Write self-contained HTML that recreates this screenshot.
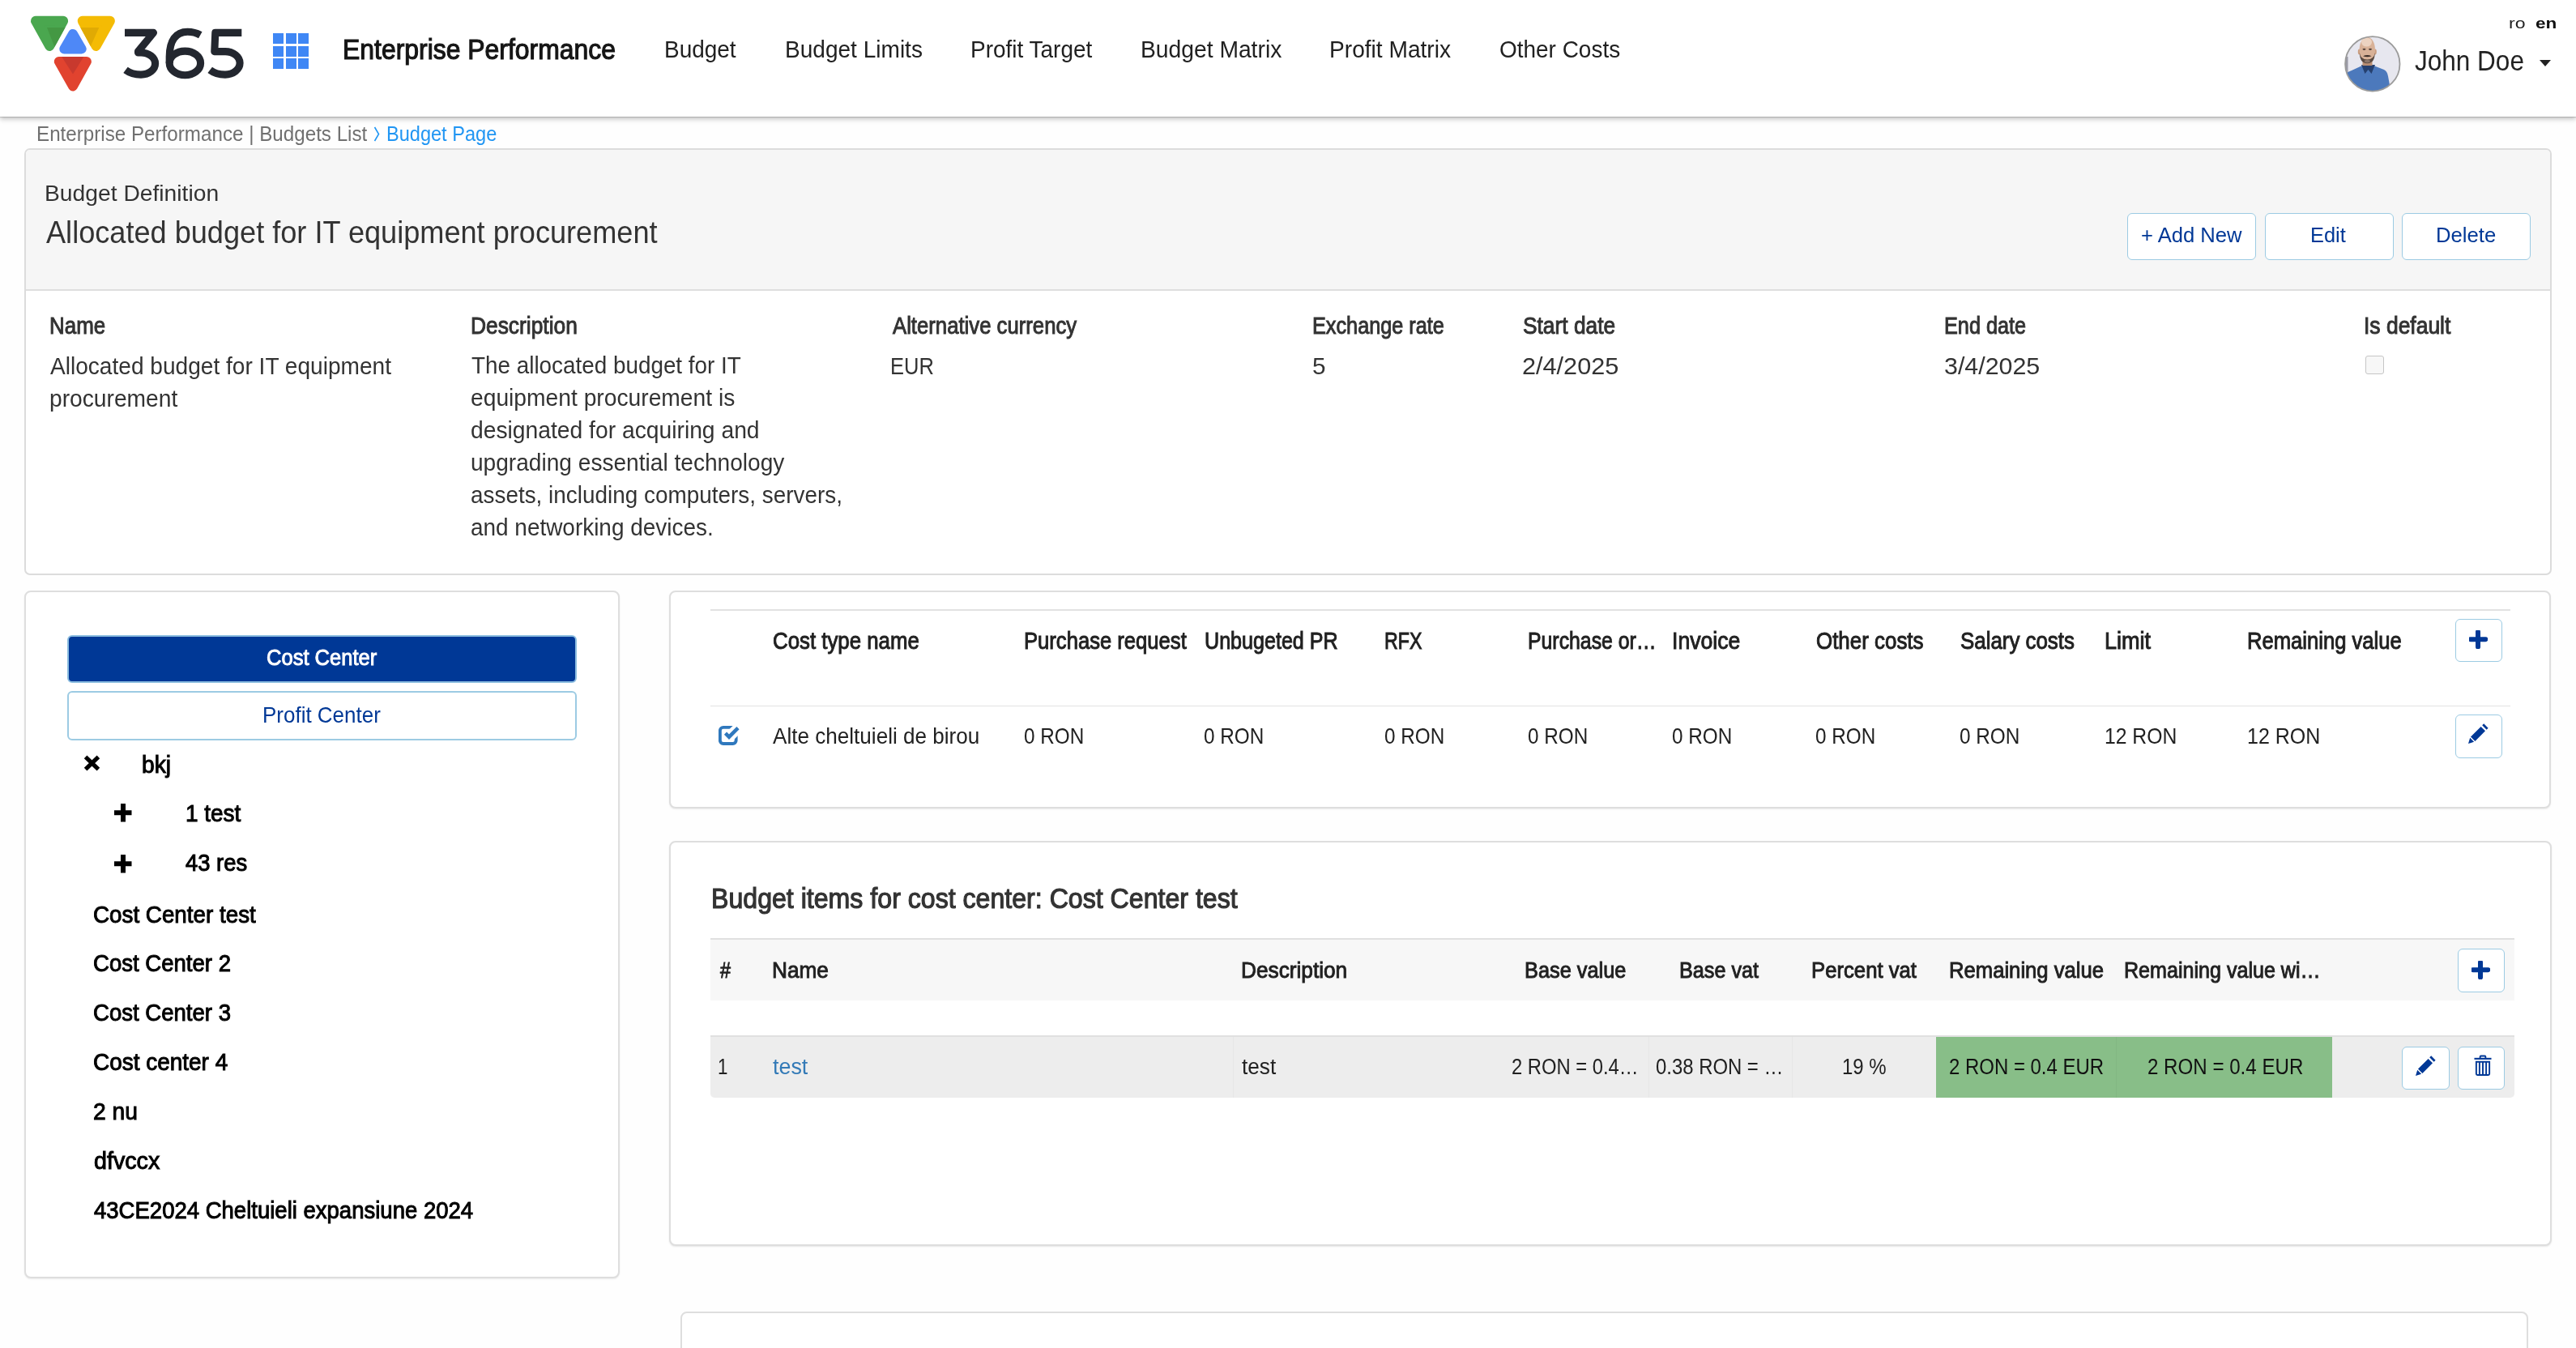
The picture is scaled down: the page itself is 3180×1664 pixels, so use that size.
<!DOCTYPE html>
<html><head><meta charset="utf-8"><title>Budget Page</title>
<style>
html,body{margin:0;padding:0}
body{width:3180px;height:1664px;position:relative;overflow:hidden;background:#fefefe;font-family:"Liberation Sans",sans-serif}
.r{position:absolute}
.t{position:absolute;white-space:nowrap;transform-origin:0 0;z-index:3}
.bl{display:inline-block;width:0;height:0}
</style></head><body>
<div class="r" style="left:0.0px;top:0.0px;width:3180.0px;height:144.0px;background:#fff;box-shadow:0 1px 1px rgba(0,0,0,.14),0 3px 6px rgba(0,0,0,.24);z-index:1"></div>
<svg class="r" style="left:0;top:0;z-index:2" width="150" height="120" viewBox="0 0 150 120">
<defs>
<mask id="mg"><path d="M44 25.8 L78.1 25.8 L61.2 56.9Z" fill="#fff" stroke="#fff" stroke-width="12" stroke-linejoin="round"/></mask>
<mask id="my"><path d="M101.7 25.8 L135.9 25.8 L118.6 56.9Z" fill="#fff" stroke="#fff" stroke-width="12" stroke-linejoin="round"/></mask>
<mask id="mr"><path d="M72.8 75.9 L106.9 75.9 L90 106.4Z" fill="#fff" stroke="#fff" stroke-width="12" stroke-linejoin="round"/></mask>
</defs>
<path d="M44 25.8 L78.1 25.8 L61.2 56.9Z" fill="#4aa74f" stroke="#4aa74f" stroke-width="12" stroke-linejoin="round"/>
<path d="M58 34.1 L83 34.1 L67.4 58 Z" fill="#449843" mask="url(#mg)"/>
<path d="M101.7 25.8 L135.9 25.8 L118.6 56.9Z" fill="#f4bb04" stroke="#f4bb04" stroke-width="12" stroke-linejoin="round"/>
<path d="M96 34.1 L122.3 34.1 L111.4 58 Z" fill="#e0aa04" mask="url(#my)"/>
<path d="M90 41.9 L100.7 60.4 L79.3 60.4Z" fill="#4e88f7" stroke="#4e88f7" stroke-width="12" stroke-linejoin="round"/>
<path d="M72.8 75.9 L106.9 75.9 L90 106.4Z" fill="#e1432f" stroke="#e1432f" stroke-width="12" stroke-linejoin="round"/>
<path d="M75.5 69 L104 69 L90 91.5 Z" fill="#c8392e" mask="url(#mr)"/>
</svg>
<div class="r" style="left:337.0px;top:41.0px;width:13.0px;height:13.0px;background:#3f87f5;z-index:2"></div>
<div class="r" style="left:352.5px;top:41.0px;width:13.0px;height:13.0px;background:#3f87f5;z-index:2"></div>
<div class="r" style="left:368.0px;top:41.0px;width:13.0px;height:13.0px;background:#3f87f5;z-index:2"></div>
<div class="r" style="left:337.0px;top:56.5px;width:13.0px;height:13.0px;background:#3f87f5;z-index:2"></div>
<div class="r" style="left:352.5px;top:56.5px;width:13.0px;height:13.0px;background:#3f87f5;z-index:2"></div>
<div class="r" style="left:368.0px;top:56.5px;width:13.0px;height:13.0px;background:#3f87f5;z-index:2"></div>
<div class="r" style="left:337.0px;top:72.0px;width:13.0px;height:13.0px;background:#3f87f5;z-index:2"></div>
<div class="r" style="left:352.5px;top:72.0px;width:13.0px;height:13.0px;background:#3f87f5;z-index:2"></div>
<div class="r" style="left:368.0px;top:72.0px;width:13.0px;height:13.0px;background:#3f87f5;z-index:2"></div>
<svg class="r" style="left:0;top:0;z-index:2" width="320" height="110" viewBox="0 0 320 110">
<g fill="none" stroke="#23272f" stroke-width="9.1" stroke-linejoin="round">
<path d="M154 40.35 H189.5 L170.5 63.5 V65 H174 A17.6 13.55 0 0 1 174 92.1 C166 92.1 160 90 155 86.3" stroke-linecap="butt"/>
<path d="M247.3 43.3 C242 40.3 236.5 39.3 231.5 39.3 C217 39.3 209.2 50 209.2 70 L209.2 78"/>
<ellipse cx="228.4" cy="77.95" rx="19.2" ry="14.85"/>
<path d="M298.3 40.35 H265.8 L264.8 63.6 H278 A18.1 14.25 0 0 1 278 92.1 C270 92.1 264 90 259.2 86.3"/>
</g></svg>
<svg class="r" style="left:2894px;top:43.5px;z-index:2" width="70" height="70" viewBox="0 0 70 70">
<defs><clipPath id="av"><circle cx="34.8" cy="34.9" r="33.5"/></clipPath></defs>
<g clip-path="url(#av)">
<rect x="0" y="0" width="70" height="70" fill="#e7e7ef"/>
<rect x="0" y="26" width="4.5" height="22" fill="#9a9aa6"/>
<path d="M-2 72 L-2 50 Q3 45 9 43 L22 37 L36 37 L49 42 Q53 44 54 50 L58 72 Z" fill="#4c79bc"/>
<path d="M21 36 L25.5 47 L29.5 42 L33.5 47 L38 36 Z" fill="#25406f"/>
<rect x="22.5" y="27" width="12" height="10" fill="#b88d72"/>
<ellipse cx="18.6" cy="20" rx="1.8" ry="3.4" fill="#c99d80"/>
<ellipse cx="38" cy="20" rx="1.8" ry="3.4" fill="#c99d80"/>
<ellipse cx="28.3" cy="17.5" rx="9.7" ry="15.8" fill="#d8b197"/>
<ellipse cx="27.5" cy="8" rx="6.5" ry="5.5" fill="#ecd3c1"/>
<ellipse cx="24.5" cy="16.8" rx="2" ry="1.1" fill="#54423a"/>
<ellipse cx="32" cy="16.8" rx="2" ry="1.1" fill="#54423a"/>
<path d="M18.8 21 Q19 34.2 28.3 34.2 Q37.6 34.2 37.8 21 Q36.5 29.5 28.3 29.5 Q20.1 29.5 18.8 21 Z" fill="#5a4a40"/>
<path d="M23 25.3 Q28.3 22.8 33.6 25.3 Q28.3 27.2 23 25.3Z" fill="#3c2e27"/>
<ellipse cx="28.3" cy="31.6" rx="3.6" ry="1.8" fill="#8d776b"/>
</g>
<circle cx="34.8" cy="34.9" r="33.7" fill="none" stroke="#9b9b9b" stroke-width="1.8"/>
</svg>
<div class="r" style="left:3135px;top:73.5px;width:0;height:0;border-left:7.5px solid transparent;border-right:7.5px solid transparent;border-top:8px solid #222;z-index:2"></div>
<svg class="r" style="left:460px;top:155px" width="12" height="22"><path d="M2.5 2 L7.5 10.5 L2.5 19" stroke="#2196f3" stroke-width="1.6" fill="none"/></svg>
<div class="r" style="left:30.2px;top:183.4px;width:3120.3px;height:526.3px;border:2px solid #dcdcdc;border-radius:7px;background:#fff;box-sizing:border-box;overflow:hidden"></div>
<div class="r" style="left:32.2px;top:185.4px;width:3116.3px;height:174.1px;background:#f6f6f6;border-bottom:2px solid #dedede;border-radius:5px 5px 0 0;box-sizing:border-box"></div>
<div class="r" style="left:2626.0px;top:262.7px;width:159.0px;height:58.3px;border:1.75px solid #9ccbe3;border-radius:6px;background:#fff;box-sizing:border-box"></div>
<div class="r" style="left:2795.5px;top:262.7px;width:159.1px;height:58.3px;border:1.75px solid #9ccbe3;border-radius:6px;background:#fff;box-sizing:border-box"></div>
<div class="r" style="left:2965.0px;top:262.7px;width:159.4px;height:58.3px;border:1.75px solid #9ccbe3;border-radius:6px;background:#fff;box-sizing:border-box"></div>
<div class="r" style="left:2920.0px;top:438.6px;width:23.4px;height:23.2px;border:1.5px solid #c6c6c6;border-radius:3px;background:#f7f7f7;box-sizing:border-box"></div>
<div class="r" style="left:30.0px;top:729.0px;width:735.0px;height:848.5px;border:2px solid #dedede;border-radius:8px;background:#fff;box-sizing:border-box;box-shadow:0 1px 2px rgba(0,0,0,.08)"></div>
<div class="r" style="left:83.0px;top:784.0px;width:629.0px;height:58.5px;background:#003896;border:2px solid #8cbde0;border-radius:6px;box-sizing:border-box"></div>
<div class="r" style="left:83.0px;top:852.5px;width:629.0px;height:61.0px;background:#fff;border:2px solid #9ccbe3;border-radius:6px;box-sizing:border-box"></div>
<svg class="r" style="left:103px;top:932px" width="21" height="20"><path d="M2.6 2.4 L18.4 17.6 M18.4 2.4 L2.6 17.6" stroke="#000" stroke-width="5.2" stroke-linecap="butt"/></svg>
<svg class="r" style="left:141px;top:992.0px" width="22" height="23"><path d="M11 0 V22.5 M0 11.2 H21.5" stroke="#000" stroke-width="6"/></svg>
<svg class="r" style="left:141px;top:1054.7px" width="22" height="23"><path d="M11 0 V22.5 M0 11.2 H21.5" stroke="#000" stroke-width="6"/></svg>
<div class="r" style="left:825.5px;top:729.0px;width:2323.9px;height:269.4px;border:2px solid #dedede;border-radius:8px;background:#fff;box-sizing:border-box;box-shadow:0 1px 2px rgba(0,0,0,.08)"></div>
<div class="r" style="left:877.0px;top:752.0px;width:2221.5px;height:1.6px;background:#e2e2e2"></div>
<div class="r" style="left:877.0px;top:870.5px;width:2221.5px;height:1.6px;background:#e2e2e2"></div>
<div class="r" style="left:3031.0px;top:763.5px;width:58.0px;height:53.5px;border:1.75px solid #9ccbe3;border-radius:6px;background:#fff;box-sizing:border-box"></div>
<div class="r" style="left:3031.0px;top:882.0px;width:58.0px;height:53.5px;border:1.75px solid #9ccbe3;border-radius:6px;background:#fff;box-sizing:border-box"></div>
<svg class="r" style="left:3047.5px;top:777.5px" width="23" height="23" viewBox="0 0 23 23"><path d="M11 2 V20.5 M1.8 11.2 H20.3" stroke="#003896" stroke-width="6" stroke-linecap="round"/></svg>
<svg class="r" style="left:3047.0px;top:893.3px" width="26" height="26" viewBox="0 0 26 26"><path d="M19.2 0.3 L24.6 5.7 L22.6 7.7 L17.2 2.3Z M15.6 3.9 L21 9.3 L8.4 21.9 L3 16.5Z M2.2 17.8 L7.1 22.7 L0 25 Z" fill="#003896"/></svg>
<svg class="r" style="left:880px;top:890px" width="40" height="40" viewBox="0 0 40 40"><defs><mask id="cbm"><rect width="40" height="40" fill="#fff"/><path d="M30.6 0 L40 0 L40 9 L25 24 L18 24 L18 12.6Z" fill="#000"/></mask></defs><rect x="8.85" y="7.85" width="19.8" height="20.2" rx="4" stroke="#2f78bd" stroke-width="3.9" fill="none" mask="url(#cbm)"/><path d="M15.5 15.2 L20 19.7 L31 8.7" stroke="#2f78bd" stroke-width="4.5" fill="none"/></svg>
<div class="r" style="left:825.5px;top:1038.2px;width:2324.5px;height:499.4px;border:2px solid #dedede;border-radius:8px;background:#fff;box-sizing:border-box;box-shadow:0 1px 2px rgba(0,0,0,.10)"></div>
<div class="r" style="left:877.0px;top:1158.0px;width:2226.5px;height:77.0px;background:#f7f7f7;border-top:2px solid #e0e0e0;box-sizing:border-box"></div>
<div class="r" style="left:877.0px;top:1278.0px;width:2226.5px;height:77.0px;background:#ededed;border-top:2px solid #e0e0e0;box-sizing:border-box;border-radius:0 0 5px 5px"></div>
<div class="r" style="left:2390.3px;top:1280.0px;width:489.2px;height:75.0px;background:#88be88"></div>
<div class="r" style="left:2612.0px;top:1280.0px;width:1.0px;height:75.0px;background:#82b782"></div>
<div class="r" style="left:1522.0px;top:1280.0px;width:1.0px;height:75.0px;background:#e6e6e6"></div>
<div class="r" style="left:2034.5px;top:1280.0px;width:1.0px;height:75.0px;background:#e6e6e6"></div>
<div class="r" style="left:2212.0px;top:1280.0px;width:1.0px;height:75.0px;background:#e6e6e6"></div>
<div class="r" style="left:3033.7px;top:1171.0px;width:58.5px;height:54.0px;border:1.75px solid #9ccbe3;border-radius:6px;background:#fff;box-sizing:border-box"></div>
<div class="r" style="left:2965.0px;top:1291.5px;width:58.5px;height:53.5px;border:1.75px solid #9ccbe3;border-radius:6px;background:#fff;box-sizing:border-box"></div>
<div class="r" style="left:3033.7px;top:1291.5px;width:58.5px;height:53.5px;border:1.75px solid #9ccbe3;border-radius:6px;background:#fff;box-sizing:border-box"></div>
<svg class="r" style="left:3051.0px;top:1186.0px" width="23" height="23" viewBox="0 0 23 23"><path d="M11 2 V20.5 M1.8 11.2 H20.3" stroke="#003896" stroke-width="6" stroke-linecap="round"/></svg>
<svg class="r" style="left:2982.2px;top:1303.3px" width="26" height="26" viewBox="0 0 26 26"><path d="M19.2 0.3 L24.6 5.7 L22.6 7.7 L17.2 2.3Z M15.6 3.9 L21 9.3 L8.4 21.9 L3 16.5Z M2.2 17.8 L7.1 22.7 L0 25 Z" fill="#003896"/></svg>
<svg class="r" style="left:3053.5px;top:1301.5px" width="22" height="26" viewBox="0 0 23 27"><path d="M8 5 V2.5 Q8 1.5 9 1.5 H14 Q15 1.5 15 2.5 V5" stroke="#003896" stroke-width="2" fill="none"/><path d="M0.5 5 H22.5" stroke="#003896" stroke-width="2.2"/><path d="M3 9 H20 V24.5 Q20 26 18.5 26 H4.5 Q3 26 3 24.5 Z" stroke="#003896" stroke-width="2" fill="none"/><path d="M7.2 9 V26 M11.5 9 V26 M15.8 9 V26" stroke="#003896" stroke-width="2"/></svg>
<div class="r" style="left:839.7px;top:1618.9px;width:2281.8px;height:181.1px;border:2px solid #dedede;border-radius:8px;background:#fff;box-sizing:border-box"></div>
<div class="t" id="ep" style="left:423.17px;top:44.01px;font-size:34.88px;line-height:34.88px;font-weight:400;color:#151515;transform:scaleX(0.9149);-webkit-text-stroke:1.19px #151515">Enterprise Performance<i class="bl"></i></div>
<div class="t" id="nav0" style="left:820.15px;top:45.81px;font-size:30.23px;line-height:30.23px;font-weight:400;color:#212121;transform:scaleX(0.9255)">Budget<i class="bl"></i></div>
<div class="t" id="nav1" style="left:969.14px;top:45.81px;font-size:30.23px;line-height:30.23px;font-weight:400;color:#212121;transform:scaleX(0.9282)">Budget Limits<i class="bl"></i></div>
<div class="t" id="nav2" style="left:1198.15px;top:45.81px;font-size:30.23px;line-height:30.23px;font-weight:400;color:#212121;transform:scaleX(0.9256)">Profit Target<i class="bl"></i></div>
<div class="t" id="nav3" style="left:1408.13px;top:45.81px;font-size:30.23px;line-height:30.23px;font-weight:400;color:#212121;transform:scaleX(0.9348)">Budget Matrix<i class="bl"></i></div>
<div class="t" id="nav4" style="left:1641.14px;top:45.81px;font-size:30.23px;line-height:30.23px;font-weight:400;color:#212121;transform:scaleX(0.9308)">Profit Matrix<i class="bl"></i></div>
<div class="t" id="nav5" style="left:1851.08px;top:45.81px;font-size:30.23px;line-height:30.23px;font-weight:400;color:#212121;transform:scaleX(0.9250)">Other Costs<i class="bl"></i></div>
<div class="t" id="ro" style="left:3097.39px;top:18.80px;font-size:19.00px;line-height:19.00px;font-weight:400;color:#222;transform:scaleX(1.2152)">ro<i class="bl"></i></div>
<div class="t" id="en" style="left:3129.95px;top:18.80px;font-size:19.00px;line-height:19.00px;font-weight:700;color:#111;transform:scaleX(1.1887)">en<i class="bl"></i></div>
<div class="t" id="jd" style="left:2981.13px;top:58.01px;font-size:34.45px;line-height:34.45px;font-weight:400;color:#222;transform:scaleX(0.9151)">John Doe<i class="bl"></i></div>
<div class="t" id="bc1" style="left:44.55px;top:153.01px;font-size:25.15px;line-height:25.15px;font-weight:400;color:#707070;transform:scaleX(0.9622)">Enterprise Performance | Budgets List<i class="bl"></i></div>
<div class="t" id="bc2" style="left:476.59px;top:153.01px;font-size:25.15px;line-height:25.15px;font-weight:400;color:#2196f3;transform:scaleX(0.9371)">Budget Page<i class="bl"></i></div>
<div class="t" id="bd" style="left:54.87px;top:224.01px;font-size:28.34px;line-height:28.34px;font-weight:400;color:#333;transform:scaleX(0.9972)">Budget Definition<i class="bl"></i></div>
<div class="t" id="bt" style="left:56.88px;top:267.51px;font-size:38.52px;line-height:38.52px;font-weight:400;color:#333;transform:scaleX(0.9381)">Allocated budget for IT equipment procurement<i class="bl"></i></div>
<div class="t" id="b_add" style="left:2643.03px;top:276.80px;font-size:26.45px;line-height:26.45px;font-weight:400;color:#003896;transform:scaleX(0.9688)">+ Add New<i class="bl"></i></div>
<div class="t" id="b_edit" style="left:2852.25px;top:276.80px;font-size:26.45px;line-height:26.45px;font-weight:400;color:#003896;transform:scaleX(0.9600)">Edit<i class="bl"></i></div>
<div class="t" id="b_del" style="left:3006.85px;top:276.80px;font-size:26.45px;line-height:26.45px;font-weight:400;color:#003896;transform:scaleX(0.9705)">Delete<i class="bl"></i></div>
<div class="t" id="l_name" style="left:61.16px;top:387.01px;font-size:29.94px;line-height:29.94px;font-weight:400;color:#333;transform:scaleX(0.8660);-webkit-text-stroke:1.02px #333">Name<i class="bl"></i></div>
<div class="t" id="l_desc" style="left:580.97px;top:387.01px;font-size:29.94px;line-height:29.94px;font-weight:400;color:#333;transform:scaleX(0.8803);-webkit-text-stroke:1.02px #333">Description<i class="bl"></i></div>
<div class="t" id="l_alt" style="left:1101.86px;top:387.01px;font-size:29.94px;line-height:29.94px;font-weight:400;color:#333;transform:scaleX(0.8587);-webkit-text-stroke:1.02px #333">Alternative currency<i class="bl"></i></div>
<div class="t" id="l_ex" style="left:1620.16px;top:387.01px;font-size:29.94px;line-height:29.94px;font-weight:400;color:#333;transform:scaleX(0.8438);-webkit-text-stroke:1.02px #333">Exchange rate<i class="bl"></i></div>
<div class="t" id="l_sd" style="left:1879.84px;top:387.01px;font-size:29.94px;line-height:29.94px;font-weight:400;color:#333;transform:scaleX(0.8793);-webkit-text-stroke:1.02px #333">Start date<i class="bl"></i></div>
<div class="t" id="l_ed" style="left:2400.00px;top:387.01px;font-size:29.94px;line-height:29.94px;font-weight:400;color:#333;transform:scaleX(0.8441);-webkit-text-stroke:1.02px #333">End date<i class="bl"></i></div>
<div class="t" id="l_def" style="left:2918.21px;top:387.01px;font-size:29.94px;line-height:29.94px;font-weight:400;color:#333;transform:scaleX(0.8836);-webkit-text-stroke:1.02px #333">Is default<i class="bl"></i></div>
<div class="t" id="v_n1" style="left:62.00px;top:435.51px;font-size:30.38px;line-height:30.38px;font-weight:400;color:#333;transform:scaleX(0.9246)">Allocated budget for IT equipment<i class="bl"></i></div>
<div class="t" id="v_n2" style="left:61.06px;top:475.51px;font-size:30.38px;line-height:30.38px;font-weight:400;color:#333;transform:scaleX(0.9283)">procurement<i class="bl"></i></div>
<div class="t" id="v_d0" style="left:581.88px;top:435.31px;font-size:30.38px;line-height:30.38px;font-weight:400;color:#333;transform:scaleX(0.9168)">The allocated budget for IT<i class="bl"></i></div>
<div class="t" id="v_d1" style="left:580.95px;top:475.11px;font-size:30.38px;line-height:30.38px;font-weight:400;color:#333;transform:scaleX(0.9292)">equipment procurement is<i class="bl"></i></div>
<div class="t" id="v_d2" style="left:580.95px;top:514.91px;font-size:30.38px;line-height:30.38px;font-weight:400;color:#333;transform:scaleX(0.9302)">designated for acquiring and<i class="bl"></i></div>
<div class="t" id="v_d3" style="left:581.03px;top:554.71px;font-size:30.38px;line-height:30.38px;font-weight:400;color:#333;transform:scaleX(0.9249)">upgrading essential technology<i class="bl"></i></div>
<div class="t" id="v_d4" style="left:580.96px;top:594.51px;font-size:30.38px;line-height:30.38px;font-weight:400;color:#333;transform:scaleX(0.9183)">assets, including computers, servers,<i class="bl"></i></div>
<div class="t" id="v_d5" style="left:580.96px;top:634.51px;font-size:30.38px;line-height:30.38px;font-weight:400;color:#333;transform:scaleX(0.9195)">and networking devices.<i class="bl"></i></div>
<div class="t" id="v_eur" style="left:1099.30px;top:435.51px;font-size:30.38px;line-height:30.38px;font-weight:400;color:#333;transform:scaleX(0.8402)">EUR<i class="bl"></i></div>
<div class="t" id="v_5" style="left:1619.99px;top:435.51px;font-size:30.38px;line-height:30.38px;font-weight:400;color:#333;transform:scaleX(0.9772)">5<i class="bl"></i></div>
<div class="t" id="v_sd" style="left:1878.99px;top:435.51px;font-size:30.38px;line-height:30.38px;font-weight:400;color:#333;transform:scaleX(1.0088)">2/4/2025<i class="bl"></i></div>
<div class="t" id="v_ed" style="left:2399.79px;top:435.51px;font-size:30.38px;line-height:30.38px;font-weight:400;color:#333;transform:scaleX(1.0001)">3/4/2025<i class="bl"></i></div>
<div class="t" id="cc" style="left:328.99px;top:799.00px;font-size:27.03px;line-height:27.03px;font-weight:400;color:#ffffff;transform:scaleX(0.9449);-webkit-text-stroke:0.92px #ffffff">Cost Center<i class="bl"></i></div>
<div class="t" id="pc" style="left:323.58px;top:869.60px;font-size:27.03px;line-height:27.03px;font-weight:400;color:#003896;transform:scaleX(0.9614)">Profit Center<i class="bl"></i></div>
<div class="t" id="bkj" style="left:174.50px;top:930.30px;font-size:29.00px;line-height:29.00px;font-weight:400;color:#000;transform:scaleX(0.9731);-webkit-text-stroke:0.99px #000">bkj<i class="bl"></i></div>
<div class="t" id="t1" style="left:229.17px;top:990.30px;font-size:29.07px;line-height:29.07px;font-weight:400;color:#000;transform:scaleX(0.9607);-webkit-text-stroke:0.99px #000">1 test<i class="bl"></i></div>
<div class="t" id="t43" style="left:229.05px;top:1051.40px;font-size:29.07px;line-height:29.07px;font-weight:400;color:#000;transform:scaleX(0.9435);-webkit-text-stroke:0.99px #000">43 res<i class="bl"></i></div>
<div class="t" id="tr0" style="left:114.65px;top:1113.50px;font-size:29.51px;line-height:29.51px;font-weight:400;color:#000;transform:scaleX(0.9418);-webkit-text-stroke:1.00px #000">Cost Center test<i class="bl"></i></div>
<div class="t" id="tr1" style="left:114.65px;top:1174.21px;font-size:29.51px;line-height:29.51px;font-weight:400;color:#000;transform:scaleX(0.9338);-webkit-text-stroke:1.00px #000">Cost Center 2<i class="bl"></i></div>
<div class="t" id="tr2" style="left:114.65px;top:1234.90px;font-size:29.51px;line-height:29.51px;font-weight:400;color:#000;transform:scaleX(0.9338);-webkit-text-stroke:1.00px #000">Cost Center 3<i class="bl"></i></div>
<div class="t" id="tr3" style="left:114.63px;top:1295.60px;font-size:29.51px;line-height:29.51px;font-weight:400;color:#000;transform:scaleX(0.9475);-webkit-text-stroke:1.00px #000">Cost center 4<i class="bl"></i></div>
<div class="t" id="tr4" style="left:114.62px;top:1357.31px;font-size:29.51px;line-height:29.51px;font-weight:400;color:#000;transform:scaleX(0.9580);-webkit-text-stroke:1.00px #000">2 nu<i class="bl"></i></div>
<div class="t" id="tr5" style="left:115.58px;top:1418.00px;font-size:29.51px;line-height:29.51px;font-weight:400;color:#000;transform:scaleX(0.9718);-webkit-text-stroke:1.00px #000">dfvccx<i class="bl"></i></div>
<div class="t" id="tr6" style="left:115.59px;top:1479.40px;font-size:29.51px;line-height:29.51px;font-weight:400;color:#000;transform:scaleX(0.9327);-webkit-text-stroke:1.00px #000">43CE2024 Cheltuieli expansiune 2024<i class="bl"></i></div>
<div class="t" id="h2_0" style="left:954.11px;top:777.01px;font-size:28.63px;line-height:28.63px;font-weight:400;color:#212121;transform:scaleX(0.9021);-webkit-text-stroke:0.97px #212121">Cost type name<i class="bl"></i></div>
<div class="t" id="h2_1" style="left:1264.37px;top:777.01px;font-size:28.63px;line-height:28.63px;font-weight:400;color:#212121;transform:scaleX(0.8948);-webkit-text-stroke:0.97px #212121">Purchase request<i class="bl"></i></div>
<div class="t" id="h2_2" style="left:1486.52px;top:777.01px;font-size:28.63px;line-height:28.63px;font-weight:400;color:#212121;transform:scaleX(0.8768);-webkit-text-stroke:0.97px #212121">Unbugeted PR<i class="bl"></i></div>
<div class="t" id="h2_3" style="left:1708.78px;top:777.01px;font-size:28.63px;line-height:28.63px;font-weight:400;color:#212121;transform:scaleX(0.8112);-webkit-text-stroke:0.97px #212121">RFX<i class="bl"></i></div>
<div class="t" id="h2_4" style="left:1885.85px;top:777.01px;font-size:28.63px;line-height:28.63px;font-weight:400;color:#212121;transform:scaleX(0.8672);-webkit-text-stroke:0.97px #212121">Purchase or…<i class="bl"></i></div>
<div class="t" id="h2_5" style="left:2063.57px;top:777.01px;font-size:28.63px;line-height:28.63px;font-weight:400;color:#212121;transform:scaleX(0.9296);-webkit-text-stroke:0.97px #212121">Invoice<i class="bl"></i></div>
<div class="t" id="h2_6" style="left:2242.25px;top:777.01px;font-size:28.63px;line-height:28.63px;font-weight:400;color:#212121;transform:scaleX(0.9056);-webkit-text-stroke:0.97px #212121">Other costs<i class="bl"></i></div>
<div class="t" id="h2_7" style="left:2419.99px;top:777.01px;font-size:28.63px;line-height:28.63px;font-weight:400;color:#212121;transform:scaleX(0.9039);-webkit-text-stroke:0.97px #212121">Salary costs<i class="bl"></i></div>
<div class="t" id="h2_8" style="left:2597.85px;top:777.01px;font-size:28.63px;line-height:28.63px;font-weight:400;color:#212121;transform:scaleX(0.9439);-webkit-text-stroke:0.97px #212121">Limit<i class="bl"></i></div>
<div class="t" id="h2_9" style="left:2774.24px;top:777.01px;font-size:28.63px;line-height:28.63px;font-weight:400;color:#212121;transform:scaleX(0.8944);-webkit-text-stroke:0.97px #212121">Remaining value<i class="bl"></i></div>
<div class="t" id="r2_name" style="left:954.04px;top:894.41px;font-size:28.34px;line-height:28.34px;font-weight:400;color:#212121;transform:scaleX(0.9213)">Alte cheltuieli de birou<i class="bl"></i></div>
<div class="t" id="r2_v0" style="left:1264.28px;top:894.41px;font-size:28.34px;line-height:28.34px;font-weight:400;color:#212121;transform:scaleX(0.8573)">0 RON<i class="bl"></i></div>
<div class="t" id="r2_v1" style="left:1486.28px;top:894.41px;font-size:28.34px;line-height:28.34px;font-weight:400;color:#212121;transform:scaleX(0.8573)">0 RON<i class="bl"></i></div>
<div class="t" id="r2_v2" style="left:1708.55px;top:894.41px;font-size:28.34px;line-height:28.34px;font-weight:400;color:#212121;transform:scaleX(0.8573)">0 RON<i class="bl"></i></div>
<div class="t" id="r2_v3" style="left:1885.71px;top:894.41px;font-size:28.34px;line-height:28.34px;font-weight:400;color:#212121;transform:scaleX(0.8573)">0 RON<i class="bl"></i></div>
<div class="t" id="r2_v4" style="left:2063.98px;top:894.41px;font-size:28.34px;line-height:28.34px;font-weight:400;color:#212121;transform:scaleX(0.8573)">0 RON<i class="bl"></i></div>
<div class="t" id="r2_v5" style="left:2241.28px;top:894.41px;font-size:28.34px;line-height:28.34px;font-weight:400;color:#212121;transform:scaleX(0.8573)">0 RON<i class="bl"></i></div>
<div class="t" id="r2_v6" style="left:2418.99px;top:894.41px;font-size:28.34px;line-height:28.34px;font-weight:400;color:#212121;transform:scaleX(0.8590)">0 RON<i class="bl"></i></div>
<div class="t" id="r2_l" style="left:2598.00px;top:894.41px;font-size:28.34px;line-height:28.34px;font-weight:400;color:#212121;transform:scaleX(0.8728)">12 RON<i class="bl"></i></div>
<div class="t" id="r2_r" style="left:2774.27px;top:894.41px;font-size:28.34px;line-height:28.34px;font-weight:400;color:#212121;transform:scaleX(0.8829)">12 RON<i class="bl"></i></div>
<div class="t" id="p3t" style="left:877.60px;top:1091.21px;font-size:35.32px;line-height:35.32px;font-weight:400;color:#333;transform:scaleX(0.9094);-webkit-text-stroke:1.20px #333">Budget items for cost center: Cost Center test<i class="bl"></i></div>
<div class="t" id="h3_0" style="left:889.01px;top:1184.00px;font-size:28.05px;line-height:28.05px;font-weight:400;color:#212121;transform:scaleX(0.8309);-webkit-text-stroke:0.95px #212121">#<i class="bl"></i></div>
<div class="t" id="h3_1" style="left:953.18px;top:1184.00px;font-size:28.05px;line-height:28.05px;font-weight:400;color:#212121;transform:scaleX(0.9345);-webkit-text-stroke:0.95px #212121">Name<i class="bl"></i></div>
<div class="t" id="h3_2" style="left:1532.07px;top:1184.00px;font-size:28.05px;line-height:28.05px;font-weight:400;color:#212121;transform:scaleX(0.9353);-webkit-text-stroke:0.95px #212121">Description<i class="bl"></i></div>
<div class="t" id="h3_3" style="left:1882.11px;top:1184.00px;font-size:28.05px;line-height:28.05px;font-weight:400;color:#212121;transform:scaleX(0.9030);-webkit-text-stroke:0.95px #212121">Base value<i class="bl"></i></div>
<div class="t" id="h3_4" style="left:2073.07px;top:1184.00px;font-size:28.05px;line-height:28.05px;font-weight:400;color:#212121;transform:scaleX(0.8982);-webkit-text-stroke:0.95px #212121">Base vat<i class="bl"></i></div>
<div class="t" id="h3_5" style="left:2235.89px;top:1184.00px;font-size:28.05px;line-height:28.05px;font-weight:400;color:#212121;transform:scaleX(0.9164);-webkit-text-stroke:0.95px #212121">Percent vat<i class="bl"></i></div>
<div class="t" id="h3_6" style="left:2406.09px;top:1184.00px;font-size:28.05px;line-height:28.05px;font-weight:400;color:#212121;transform:scaleX(0.9145);-webkit-text-stroke:0.95px #212121">Remaining value<i class="bl"></i></div>
<div class="t" id="h3_7" style="left:2622.38px;top:1184.00px;font-size:28.05px;line-height:28.05px;font-weight:400;color:#212121;transform:scaleX(0.8944);-webkit-text-stroke:0.95px #212121">Remaining value wi…<i class="bl"></i></div>
<div class="t" id="r3_0" style="left:886.35px;top:1303.21px;font-size:27.62px;line-height:27.62px;font-weight:400;color:#212121;transform:scaleX(0.8082)">1<i class="bl"></i></div>
<div class="t" id="r3_1" style="left:954.11px;top:1303.21px;font-size:27.62px;line-height:27.62px;font-weight:400;color:#337ab7;transform:scaleX(0.9740)">test<i class="bl"></i></div>
<div class="t" id="r3_2" style="left:1533.00px;top:1303.21px;font-size:27.62px;line-height:27.62px;font-weight:400;color:#212121;transform:scaleX(0.9471)">test<i class="bl"></i></div>
<div class="t" id="r3_3" style="left:1866.14px;top:1303.21px;font-size:27.62px;line-height:27.62px;font-weight:400;color:#212121;transform:scaleX(0.8610)">2 RON = 0.4…<i class="bl"></i></div>
<div class="t" id="r3_4" style="left:2043.96px;top:1303.21px;font-size:27.62px;line-height:27.62px;font-weight:400;color:#212121;transform:scaleX(0.8654)">0.38 RON = …<i class="bl"></i></div>
<div class="t" id="r3_5" style="left:2273.83px;top:1303.21px;font-size:27.62px;line-height:27.62px;font-weight:400;color:#212121;transform:scaleX(0.8693)">19 %<i class="bl"></i></div>
<div class="t" id="r3_6" style="left:2406.28px;top:1303.21px;font-size:27.62px;line-height:27.62px;font-weight:400;color:#111;transform:scaleX(0.8679)">2 RON = 0.4 EUR<i class="bl"></i></div>
<div class="t" id="r3_7" style="left:2650.56px;top:1303.21px;font-size:27.62px;line-height:27.62px;font-weight:400;color:#111;transform:scaleX(0.8734)">2 RON = 0.4 EUR<i class="bl"></i></div>
</body></html>
